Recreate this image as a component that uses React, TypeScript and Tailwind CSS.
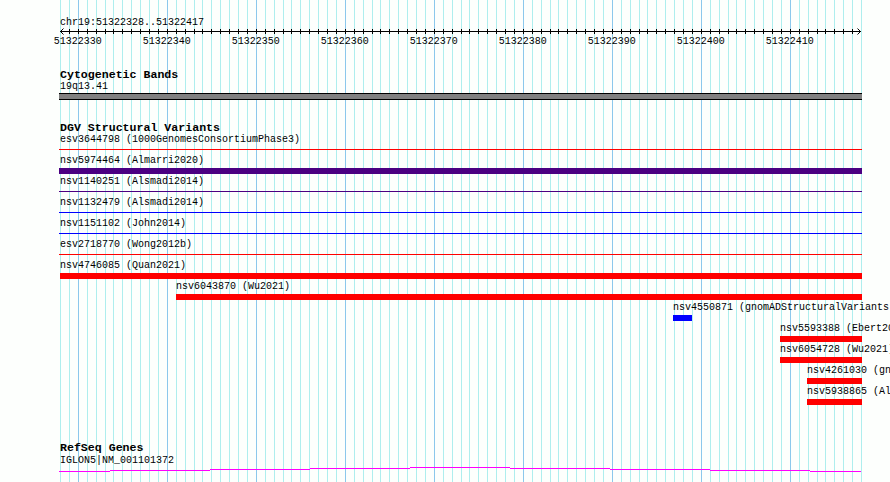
import React from "react";

const X = (k: number) => 60 + k * 8.9;
const PX = (k: number) => Math.round(X(k));

type Row = {
  label: string;
  start: number; // px left
  end: number; // px right
  kind: "thin" | "thick";
  color: string;
};

const rows: Row[] = [
  { label: "esv3644798 (1000GenomesConsortiumPhase3)", start: 59, end: 862, kind: "thin", color: "#ff0000" },
  { label: "nsv5974464 (Almarri2020)", start: 59, end: 862, kind: "thick", color: "#4b0082" },
  { label: "nsv1140251 (Alsmadi2014)", start: 59, end: 862, kind: "thin", color: "#4b0082" },
  { label: "nsv1132479 (Alsmadi2014)", start: 59, end: 862, kind: "thin", color: "#0000ff" },
  { label: "nsv1151102 (John2014)", start: 59, end: 862, kind: "thin", color: "#0000ff" },
  { label: "esv2718770 (Wong2012b)", start: 59, end: 862, kind: "thin", color: "#ff0000" },
  { label: "nsv4746085 (Quan2021)", start: 60, end: 862, kind: "thick", color: "#ff0000" },
  { label: "nsv6043870 (Wu2021)", start: 176, end: 862, kind: "thick", color: "#ff0000" },
  { label: "nsv4550871 (gnomADStructuralVariants)", start: 673, end: 692, kind: "thick", color: "#0000ff" },
  { label: "nsv5593388 (Ebert2021)", start: 780, end: 862, kind: "thick", color: "#ff0000" },
  { label: "nsv6054728 (Wu2021)", start: 780, end: 862, kind: "thick", color: "#ff0000" },
  { label: "nsv4261030 (gnomADStructuralVariants)", start: 807, end: 862, kind: "thick", color: "#ff0000" },
  { label: "nsv5938865 (Alsmadi2014)", start: 807, end: 862, kind: "thick", color: "#ff0000" },
];

function Grid() {
  const lines = [];
  for (let k = 0; k <= 90; k++) {
    const major = (k - 2) % 10 === 0;
    lines.push(
      <line
        key={k}
        x1={PX(k) + 0.5}
        x2={PX(k) + 0.5}
        y1={0}
        y2={482}
        stroke={major ? "#8cc8ec" : "#aeeeee"}
        strokeWidth={1}
      />
    );
  }
  return (
    <svg className="absolute left-0 top-0" width={890} height={482} shapeRendering="crispEdges">
      {lines}
    </svg>
  );
}

function Ruler() {
  const ticks = [];
  for (let k = 1; k <= 89; k++) {
    ticks.push(
      <line key={k} x1={PX(k) + 0.5} x2={PX(k) + 0.5} y1={0} y2={5} stroke="#000" strokeWidth={1} />
    );
  }
  const labels = [];
  for (let i = 0; i < 9; i++) {
    const k = 2 + i * 10;
    labels.push(
      <text key={k} x={X(k)} y={15} textAnchor="middle" fontSize={10} fill="#000">
        {String(51322330 + i * 10)}
      </text>
    );
  }
  return (
    <svg
      className="block overflow-visible font-['Liberation_Mono',monospace]"
      width={890}
      height={22}
    >
      <g shapeRendering="crispEdges">
        <line x1={60} x2={861} y1={2.5} y2={2.5} stroke="#000" strokeWidth={1} />
        {ticks}
      </g>
      <polyline points="63.5,-0.5 60.5,2.5 63.5,5.5" fill="none" stroke="#000" strokeWidth={1} />
      <polyline points="857.5,-0.5 860.5,2.5 857.5,5.5" fill="none" stroke="#000" strokeWidth={1} />
      {labels}
    </svg>
  );
}

function GeneLine() {
  const segs: [number, number, number][] = [
    [59, 110, 471],
    [110, 210, 470],
    [210, 310, 469],
    [310, 410, 468],
    [410, 510, 467],
    [510, 610, 468],
    [610, 710, 469],
    [710, 810, 470],
    [810, 861, 471],
  ];
  return (
    <svg className="block" width={890} height={6} shapeRendering="crispEdges">
      {segs.map(([a, b, y], i) => (
        <rect key={i} x={a} y={y - 467} width={b - a} height={1} fill="#ff00ff" />
      ))}
    </svg>
  );
}

export default function App() {
  return (
    <div className="relative w-[890px] h-[482px] overflow-hidden bg-[#fdfffd] text-black font-['Liberation_Mono',monospace]">
      <Grid />
      <div className="relative flex flex-col whitespace-nowrap">
        <div className="pl-[60px] pt-[17px] text-[10px] leading-[12px]">chr19:51322328..51322417</div>
        <Ruler />

        <div className="mt-[17px] pl-[60px] text-[11.6px] leading-[13px] font-bold">Cytogenetic Bands</div>
        <div className="pl-[60px] text-[10px] leading-[12px]">19q13.41</div>
        <div className="ml-[59px] w-[803px] h-[7px] border-y border-black bg-[#808080]" />

        <div className="mt-[21px] pl-[60px] text-[11.6px] leading-[13px] font-bold">DGV Structural Variants</div>
        {rows.map((r, i) => (
          <div key={i} className="h-[21px] flex flex-col">
            <div className="text-[10px] leading-[12px]" style={{ marginLeft: r.start === 59 ? 60 : r.start }}>
              {r.label}
            </div>
            {r.kind === "thin" ? (
              <div
                className="mt-[3px] h-[1px]"
                style={{ marginLeft: r.start, width: r.end - r.start, backgroundColor: r.color }}
              />
            ) : (
              <div
                className="mt-[1px] h-[6px]"
                style={{ marginLeft: r.start, width: r.end - r.start, backgroundColor: r.color }}
              />
            )}
          </div>
        ))}

        <div className="mt-[34px] pl-[60px] text-[11.6px] leading-[14px] font-bold">RefSeq Genes</div>
        <div className="pl-[60px] text-[10px] leading-[12px]">IGLON5|NM_001101372</div>
        <GeneLine />
      </div>
    </div>
  );
}
